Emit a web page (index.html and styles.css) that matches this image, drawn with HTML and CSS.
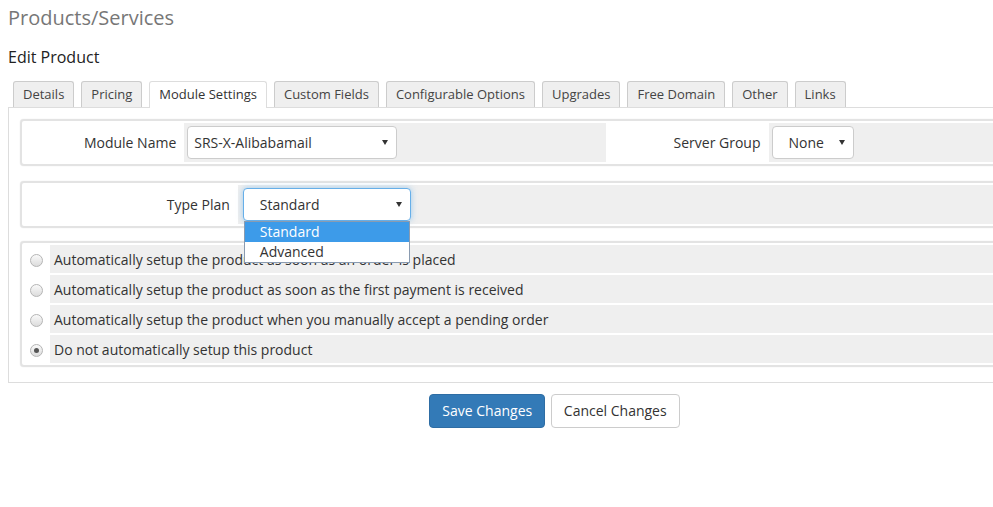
FILE: index.html
```html
<!DOCTYPE html>
<html lang="en">
<head>
    <meta charset="UTF-8">
    <title>Products/Services</title>
    <link rel="stylesheet" href="styles.css">
</head>
<body>
    <div class="page">
        <h1>Products/Services</h1>
        <h2>Edit Product</h2>

        <ul class="tabs">
            <li class="tab">Details</li>
            <li class="tab">Pricing</li>
            <li class="tab active">Module Settings</li>
            <li class="tab">Custom Fields</li>
            <li class="tab">Configurable Options</li>
            <li class="tab">Upgrades</li>
            <li class="tab">Free Domain</li>
            <li class="tab">Other</li>
            <li class="tab">Links</li>
        </ul>

        <div class="tab-content">
            <!-- module / server group -->
            <table class="form">
                <tr>
                    <td class="fieldlabel w15">Module Name</td>
                    <td class="fieldarea w40">
                        <div class="select module-select">
                            <span>SRS-X-Alibabamail</span><span class="caret"></span>
                        </div>
                    </td>
                    <td class="fieldlabel w15">Server Group</td>
                    <td class="fieldarea">
                        <div class="select group-select">
                            <span>None</span><span class="caret"></span>
                        </div>
                    </td>
                </tr>
            </table>

            <!-- module config options -->
            <table class="form config">
                <tr>
                    <td class="fieldlabel w20">Type Plan</td>
                    <td class="fieldarea">
                        <div class="select plan-select focused">
                            <span>Standard</span><span class="caret"></span>
                            <ul class="dropdown">
                                <li class="selected">Standard</li>
                                <li>Advanced</li>
                            </ul>
                        </div>
                    </td>
                </tr>
            </table>

            <!-- autosetup -->
            <table class="form radios">
                <tr>
                    <td class="radio-cell"><span class="radio"></span></td>
                    <td class="fieldarea">Automatically setup the product as soon as an order is placed</td>
                </tr>
                <tr>
                    <td class="radio-cell"><span class="radio"></span></td>
                    <td class="fieldarea">Automatically setup the product as soon as the first payment is received</td>
                </tr>
                <tr>
                    <td class="radio-cell"><span class="radio"></span></td>
                    <td class="fieldarea">Automatically setup the product when you manually accept a pending order</td>
                </tr>
                <tr>
                    <td class="radio-cell"><span class="radio checked"></span></td>
                    <td class="fieldarea">Do not automatically setup this product</td>
                </tr>
            </table>
        </div>

        <div class="btn-bar">
            <button class="btn btn-primary">Save Changes</button>
            <button class="btn btn-default">Cancel Changes</button>
        </div>
    </div>
</body>
</html>
```

FILE: styles.css
```css
html, body {
    overflow-x: hidden;
}

body {
    font-family: 'Open Sans', 'Noto Sans', sans-serif;
    font-size: 14px;
    color: #333;
    background-color: #fff;
    margin: 0;
}

.page {
    width: 1093px;
    padding: 7px 8px 40px;
}

h1 {
    font-size: 20px;
    font-weight: normal;
    line-height: 22px;
    color: #777;
    margin: 0;
}

h2 {
    font-size: 16px;
    font-weight: normal;
    line-height: 22px;
    color: #222;
    margin: 17px 0 0;
}

.tabs {
    display: flex;
    list-style: none;
    margin: 13px 0 0;
    padding: 0 0 0 5px;
}

.tab {
    font-size: 13px;
    line-height: 25px;
    padding: 0 9px;
    margin-right: 7px;
    background-color: #efefef;
    border: 1px solid #ccc;
    border-bottom: none;
    border-radius: 3px 3px 0 0;
    color: #444;
}

.tab.active {
    background-color: #fff;
    border-color: #ddd;
    margin-bottom: -1px;
    padding-bottom: 1px;
    color: #333;
}

.tab-content {
    border: 1px solid #ddd;
    padding: 11px 11px 15px;
}

.form {
    width: 100%;
    border: 2px solid #e3e3e3;
    border-radius: 4px;
    border-spacing: 2px;
    box-shadow: 0 0 1px #cfcfcf;
    margin-bottom: 15px;
}

.form.config {
    margin-bottom: 13px;
}

.form:last-child {
    margin-bottom: 0;
}

.form td {
    padding: 0;
}

.fieldlabel {
    text-align: right;
    padding-right: 6px !important;
    white-space: nowrap;
}

.fieldarea {
    background-color: #efefef;
    padding: 3px 3px !important;
}

.w15 { width: 15%; }
.w20 { width: 20%; }
.w40 { width: 40%; }

.select {
    position: relative;
    display: flex;
    align-items: center;
    justify-content: space-between;
    box-sizing: border-box;
    height: 33px;
    padding: 0 8px 0 6px;
    background-color: #fff;
    border: 1px solid #ccc;
    border-radius: 4px;
    color: #333;
}

.module-select {
    width: 210px;
}

.group-select {
    width: 82px;
    padding-left: 16px;
}

.plan-select {
    width: 168px;
    padding-left: 16px;
    margin-left: 2px;
}

.select.focused {
    border-color: #66afe9;
    box-shadow: 0 0 6px rgba(102, 175, 233, 0.6);
}

.caret {
    width: 0;
    height: 0;
    border-left: 3.5px solid transparent;
    border-right: 3.5px solid transparent;
    border-top: 5px solid #333;
}

.dropdown {
    position: absolute;
    top: 100%;
    left: 0;
    width: 100%;
    box-sizing: border-box;
    list-style: none;
    margin: 1px 0 0;
    padding: 0;
    background-color: #fff;
    border: 1px solid #8a9bb0;
    z-index: 5;
}

.dropdown li {
    line-height: 20px;
    padding-left: 15px;
}

.dropdown li.selected {
    background-color: #3d9be9;
    color: #fff;
}

.radios td {
    height: 28px;
}

.radio-cell {
    width: 24px;
    text-align: center;
}

.radios .fieldarea {
    padding: 0 4px !important;
}

.radio {
    display: inline-block;
    position: relative;
    width: 11px;
    height: 11px;
    border: 1px solid #b5b5b5;
    border-radius: 50%;
    background: linear-gradient(#fafafa, #dcdcdc);
    vertical-align: middle;
}

.radio.checked::after {
    content: "";
    position: absolute;
    top: 3px;
    left: 3px;
    width: 5px;
    height: 5px;
    border-radius: 50%;
    background-color: #555;
}

.btn-bar {
    text-align: center;
    margin-top: 11px;
}

.btn {
    font-family: inherit;
    font-size: 14px;
    line-height: 20px;
    padding: 6px 12px;
    border: 1px solid transparent;
    border-radius: 4px;
    margin: 0 1px;
    cursor: pointer;
}

.btn-primary {
    background-color: #337ab7;
    border-color: #2e6da4;
    color: #fff;
}

.btn-default {
    background-color: #fff;
    border-color: #ccc;
    color: #333;
}
```
